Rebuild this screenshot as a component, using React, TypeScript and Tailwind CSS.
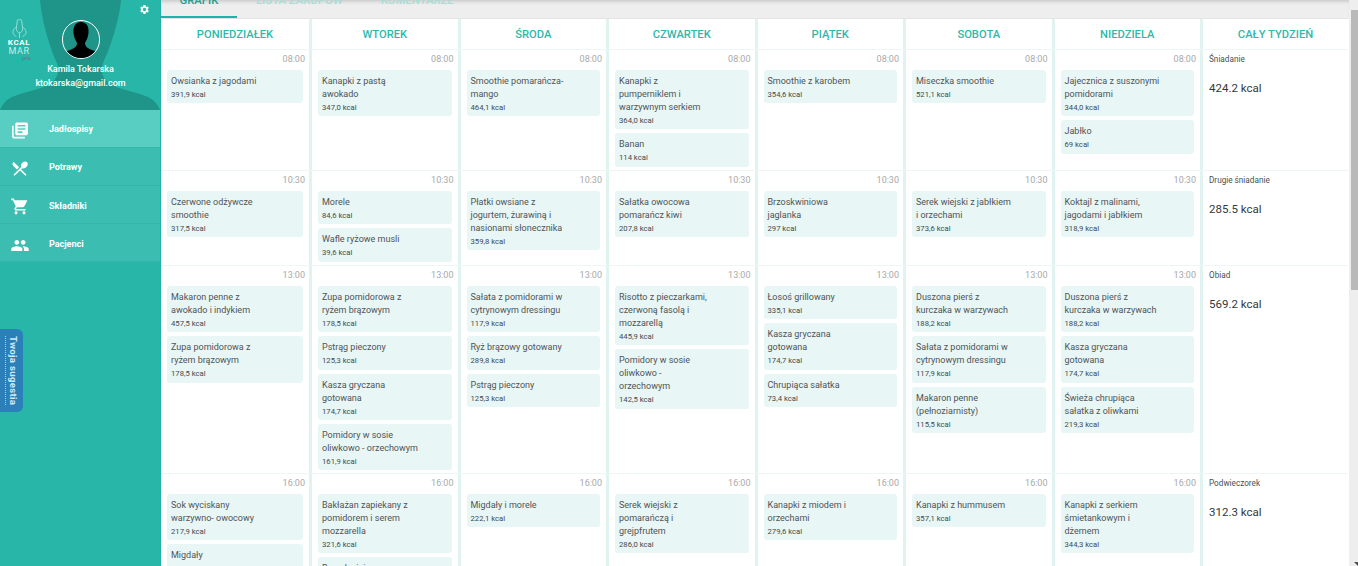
import { MdLibraryBooks, MdPeople, MdRestaurantMenu, MdSettings, MdShoppingCart } from "react-icons/md";

type Meal = [string, string];
type Slot = { time: string; meals: Meal[] };

const days: { name: string; slots: Meal[][] }[] = [
  {
    name: "PONIEDZIAŁEK",
    slots: [
      [["Owsianka z jagodami", "391,9 kcal"]],
      [["Czerwone odżywcze\nsmoothie", "317,5 kcal"]],
      [["Makaron penne z\nawokado i indykiem", "457,5 kcal"], ["Zupa pomidorowa z\nryżem brązowym", "178,5 kcal"]],
      [["Sok wyciskany\nwarzywno- owocowy", "217,9 kcal"], ["Migdały", "99,9 kcal"]],
    ],
  },
  {
    name: "WTOREK",
    slots: [
      [["Kanapki z pastą\nawokado", "347,0 kcal"]],
      [["Morele", "84,6 kcal"], ["Wafle ryżowe musli", "39,6 kcal"]],
      [["Zupa pomidorowa z\nryżem brązowym", "178,5 kcal"], ["Pstrąg pieczony", "125,3 kcal"], ["Kasza gryczana\ngotowana", "174,7 kcal"], ["Pomidory w sosie\noliwkowo - orzechowym", "161,9 kcal"]],
      [["Bakłażan zapiekany z\npomidorem i serem\nmozzarella", "321,6 kcal"], ["Brzoskwinia", "39,0 kcal"]],
    ],
  },
  {
    name: "ŚRODA",
    slots: [
      [["Smoothie pomarańcza-\nmango", "464,1 kcal"]],
      [["Płatki owsiane z\njogurtem, żurawiną i\nnasionami słonecznika", "359,8 kcal"]],
      [["Sałata z pomidorami w\ncytrynowym dressingu", "117,9 kcal"], ["Ryż brązowy gotowany", "289,8 kcal"], ["Pstrąg pieczony", "125,3 kcal"]],
      [["Migdały i morele", "222,1 kcal"]],
    ],
  },
  {
    name: "CZWARTEK",
    slots: [
      [["Kanapki z\npumperniklem i\nwarzywnym serkiem", "364,0 kcal"], ["Banan", "114 kcal"]],
      [["Sałatka owocowa\npomarańcz kiwi", "207,8 kcal"]],
      [["Risotto z pieczarkami,\nczerwoną fasolą i\nmozzarellą", "445,9 kcal"], ["Pomidory w sosie\noliwkowo -\norzechowym", "142,5 kcal"]],
      [["Serek wiejski z\npomarańczą i\ngrejpfrutem", "286,0 kcal"]],
    ],
  },
  {
    name: "PIĄTEK",
    slots: [
      [["Smoothie z karobem", "354,6 kcal"]],
      [["Brzoskwiniowa\njaglanka", "297 kcal"]],
      [["Łosoś grillowany", "335,1 kcal"], ["Kasza gryczana\ngotowana", "174,7 kcal"], ["Chrupiąca sałatka", "73,4 kcal"]],
      [["Kanapki z miodem i\norzechami", "279,6 kcal"]],
    ],
  },
  {
    name: "SOBOTA",
    slots: [
      [["Miseczka smoothie", "521,1 kcal"]],
      [["Serek wiejski z jabłkiem\ni orzechami", "373,6 kcal"]],
      [["Duszona pierś z\nkurczaka w warzywach", "188,2 kcal"], ["Sałata z pomidorami w\ncytrynowym dressingu", "117,9 kcal"], ["Makaron penne\n(pełnoziarnisty)", "115,5 kcal"]],
      [["Kanapki z hummusem", "357,1 kcal"]],
    ],
  },
  {
    name: "NIEDZIELA",
    slots: [
      [["Jajecznica z suszonymi\npomidorami", "344,0 kcal"], ["Jabłko", "69 kcal"]],
      [["Koktajl z malinami,\njagodami i jabłkiem", "318,9 kcal"]],
      [["Duszona pierś z\nkurczaka w warzywach", "188,2 kcal"], ["Kasza gryczana\ngotowana", "174,7 kcal"], ["Świeża chrupiąca\nsałatka z oliwkami", "219,3 kcal"]],
      [["Kanapki z serkiem\nśmietankowym i\ndżemem", "344,3 kcal"]],
    ],
  },
];

const times = ["08:00", "10:30", "13:00", "16:00"];
const rowHeights = ["h-[121px]", "h-[95px]", "h-[208px]", "h-[120px]"];
const week: [string, string][] = [
  ["Śniadanie", "424.2 kcal"],
  ["Drugie śniadanie", "285.5 kcal"],
  ["Obiad", "569.2 kcal"],
  ["Podwieczorek", "312.3 kcal"],
];

const navItems = [
  { label: "Jadłospisy", icon: MdLibraryBooks, active: true, pad: "pt-[3px]" },
  { label: "Potrawy", icon: MdRestaurantMenu, active: false, pad: "pt-[3px]" },
  { label: "Składniki", icon: MdShoppingCart, active: false, pad: "pt-[4px]" },
  { label: "Pacjenci", icon: MdPeople, active: false, pad: "pt-[5px]" },
];

function Sidebar() {
  return (
    <aside className="relative w-[160px] shrink-0 bg-[#27b6a8] font-['Roboto',sans-serif]">
      <div className="relative h-[110px] overflow-hidden">
        <svg className="absolute inset-0" width="160" height="110" viewBox="0 0 160 110">
          <path
            d="M40 0 C42 22 50 48 57 63 C60 72 57 79 50 84 C42 89 24 92 12 97 C6 100 2 105 0 110 L160 110 C158 105 154 100 148 97 C136 92 118 89 110 84 C103 79 100 72 103 63 C110 48 119 22 121 0 Z"
            fill="#1f9488"
          />
        </svg>
        <MdSettings className="absolute left-[139px] top-[4px] text-white" size={11} />
        <div className="absolute left-[7px] top-[19px] flex w-[24px] flex-col items-center text-white">
          <svg width="15" height="19" viewBox="0 0 14 18" fill="none" stroke="#a9e2da" strokeWidth="0.8">
            <path d="M5 1 C6 0.5 8 0.5 9 1 L10 9 C10 12 8 13 7 13 C6 13 4 12 4 9 Z" />
            <path d="M4 8 C1 9 0.5 12 1 14 L4 17 M10 8 C13 9 13.5 12 13 14 L10 17 M7 13 L7 18" />
          </svg>
          <span className="mt-[1px] text-[8px] font-bold leading-[7px] tracking-[0.6px]">KCAL</span>
          <span className="mt-[1px] text-[9px] leading-[8px] tracking-[0.6px] text-[#cdeee9]">MAR</span>
          <span className="self-end text-[6px] leading-[6px] text-[#7b6a8c]">.pro</span>
        </div>
        <div className="absolute left-[62px] top-[20px] h-[39px] w-[38px] overflow-hidden rounded-full border border-white bg-[#1f9488]">
          <svg width="36" height="37" viewBox="0 0 36 37">
            <path d="M18 1 C24 1 26 6 25.5 12 C25 17 23 20 22 22 C22 25 24 27 29 29 C33 30 35 32 36 37 L0 37 C1 32 3 30 7 29 C12 27 14 25 14 22 C13 20 11 17 10.5 12 C10 6 12 1 18 1 Z" fill="#000" />
          </svg>
        </div>
        <div className="absolute inset-x-0 top-[62px] pl-[1px] text-center text-[9px] font-medium leading-[14px] text-white">
          <p>Kamila Tokarska</p>
          <p>ktokarska@gmail.com</p>
        </div>
      </div>
      <nav>
        {navItems.map((item) => (
          <div
            key={item.label}
            className={`flex h-[38px] items-center border-b border-[#33b5a8] pl-[10px] text-[9px] font-bold text-white ${item.pad} ${item.active ? "bg-[#58cdc2]" : "bg-[#3bbdb1]"}`}
          >
            <item.icon size={19} className="w-[20px]" />
            <span className="ml-[19px]">{item.label}</span>
          </div>
        ))}
      </nav>
      <div className="absolute left-0 top-[329px] flex h-[83px] w-[23px] items-center justify-center rounded-r-[6px] bg-[#2c80b9]">
        <span className="border-l border-dotted border-[#a9d3ea] pl-[3px] text-[9.6px] font-bold leading-[9px] tracking-[0.3px] text-[#cfe9f5] [writing-mode:vertical-rl]">
          Twoja sugestia
        </span>
      </div>
    </aside>
  );
}

function Tabs() {
  return (
    <div className="flex h-[19px] shrink-0 overflow-hidden border-b border-[#e4e4e4] bg-[#eeeeee] text-[11.3px] font-medium leading-[14px] shadow-[inset_0_4px_4px_-3px_rgba(0,0,0,0.2)]">
      <div className="h-[19px] w-[76px] border-b-[3px] border-[#20b2a4] text-center text-[#2b9c90]">
        <span className="relative top-[-6px]">GRAFIK</span>
      </div>
      <span className="relative top-[-6px] ml-[19px] text-[#a9dcd6]">LISTA ZAKUPÓW</span>
      <span className="relative top-[-6px] ml-[38px] text-[#a9dcd6]">KOMENTARZE</span>
    </div>
  );
}

function MealCard({ name, kcal }: { name: string; kcal: string }) {
  return (
    <div className="rounded-[3px] bg-[#e8f6f5] pb-[2.25px] pl-[4px] pr-[4px] pt-[5px] text-[#4f5457]">
      <p className="whitespace-pre-line text-[9px] leading-[13px]">{name}</p>
      <p className="text-[7.7px] leading-[13px] text-[#454a4d]">{kcal}</p>
    </div>
  );
}

function SlotCell({ slot }: { slot: Slot }) {
  return (
    <div className="border-r-[3px] border-[#e1f3f1] px-[6px]">
      <p className="-mr-[2px] h-[20px] pt-[3px] text-right text-[9px] leading-[13px] text-[#a9a9a9]">{slot.time}</p>
      <div className="flex flex-col gap-[4px]">
        {slot.meals.map((m, i) => (
          <MealCard key={i} name={m[0]} kcal={m[1]} />
        ))}
      </div>
    </div>
  );
}

export default function App() {
  return (
    <div className="flex h-[566px] w-[1358px] overflow-hidden bg-white font-['Roboto',sans-serif]">
      <Sidebar />
      <main className="flex min-w-0 flex-1 flex-col overflow-hidden border-l border-[#20b2a4]">
        <Tabs />
        <div className="mr-[1px] grid grid-cols-[151px_repeat(6,148.5px)_1fr] border-b border-[#edf6f5]">
          {days.map((d) => (
            <div key={d.name} className="flex h-[30px] items-center justify-center border-r-[3px] border-[#e1f3f1] pt-[2px] text-[11.2px] font-medium text-[#2fb8ab]">
              {d.name}
            </div>
          ))}
          <div className="flex h-[30px] items-center justify-center pt-[2px] text-[11.2px] font-medium text-[#2fb8ab]">CAŁY TYDZIEŃ</div>
        </div>
        {times.map((time, r) => (
          <div key={time} className={`mr-[1px] grid shrink-0 grid-cols-[151px_repeat(6,148.5px)_1fr] border-b border-[#edf6f5] ${rowHeights[r]}`}>
            {days.map((d) => (
              <SlotCell key={d.name} slot={{ time, meals: d.slots[r] }} />
            ))}
            <div className="pl-[6px] pt-[4px] text-[#4a4f52]">
              <p className="text-[8.2px] leading-[11px]">{week[r][0]}</p>
              <p className="mt-[16px] text-[11.5px] leading-[15px] text-[#33383b]">{week[r][1]}</p>
            </div>
          </div>
        ))}
      </main>
      <div className="relative w-[9px] shrink-0 bg-[#eeeeee] pl-[2px] pt-[10px]">
        <div className="h-[280px] bg-[#b9b9b9]" />
        <div className="absolute bottom-[0px] right-0 h-0 w-0 border-l-[4px] border-t-[4px] border-l-transparent border-t-[#505050]" />
      </div>
    </div>
  );
}
